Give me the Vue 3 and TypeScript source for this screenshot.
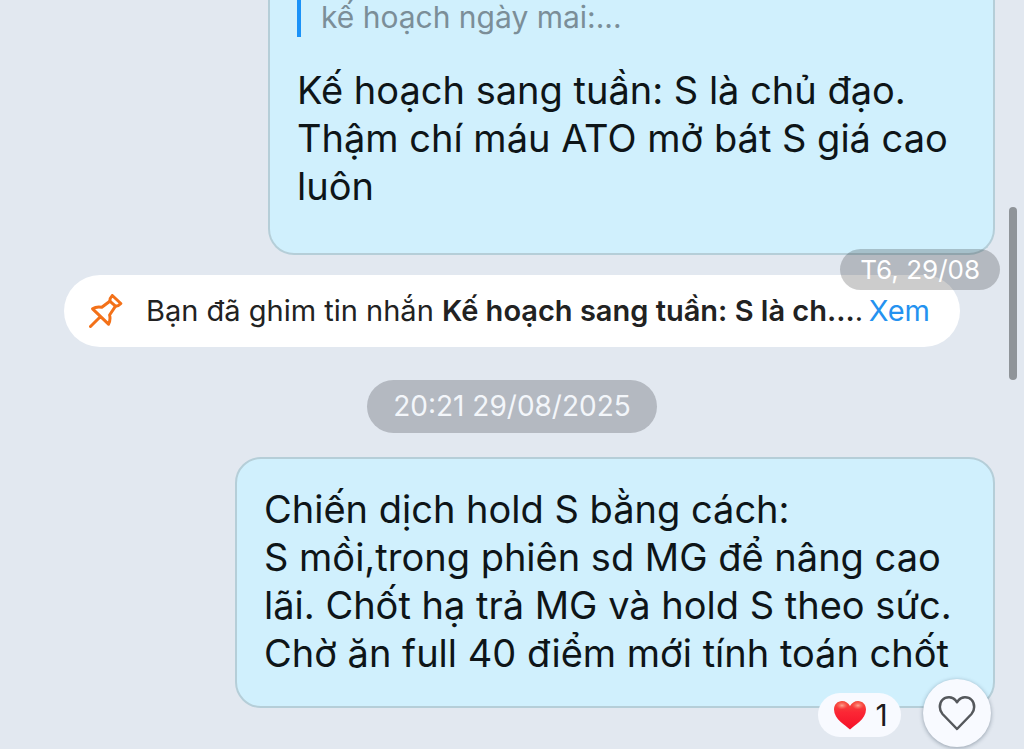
<script setup lang="ts">
import { ref } from 'vue'

interface Message {
  quote?: string
  lines: string[]
}

const earlier: Message = {
  quote: 'kế hoạch ngày mai:...',
  lines: ['Kế hoạch sang tuần: S là chủ đạo.', 'Thậm chí máu ATO mở bát S giá cao', 'luôn'],
}

const latest: Message = {
  lines: [
    'Chiến dịch hold S bằng cách:',
    'S mồi,trong phiên sd MG để nâng cao',
    'lãi. Chốt hạ trả MG và hold S theo sức.',
    'Chờ ăn full 40 điểm mới tính toán chốt',
  ],
}

const hearts = ref<number>(1)
</script>

<template>
  <main class="chat">
    <article class="bubble earlier">
      <blockquote class="quote">{{ earlier.quote }}</blockquote>
      <p class="text">{{ earlier.lines.join('\n') }}</p>
    </article>

    <section class="notice">
      <svg class="pin" viewBox="0 0 34 34" aria-hidden="true">
        <path d="M1.500 32.500L11.300 22.700M3.600 14.800Q7.500 12.200 12.800 13.300L20.800 7.200Q20.800 4 23.300 1.500L31.800 9.500Q29.500 12.200 26.500 12.200L20.600 21Q21.800 26 19.500 30.200Z" />
        <path d="M20.800 7.200L26.500 12.200" />
      </svg>
      <p class="notice-text">Bạn đã ghim tin nhắn <b>Kế hoạch sang tuần: S là ch...</b>.</p>
      <a class="view" href="#latest">Xem</a>
      <span class="day">T6, 29/08</span>
    </section>

    <time class="stamp" datetime="2025-08-29T20:21">20:21 29/08/2025</time>

    <article id="latest" class="bubble latest">
      <p class="text">{{ latest.lines.join('\n') }}</p>
      <div class="reactions">
        <button class="count" type="button" aria-label="Cảm xúc">
          <svg class="heart" viewBox="0 0 34 30" aria-hidden="true">
            <defs>
              <linearGradient id="heartFill" x1="0" y1="0" x2="0" y2="1">
                <stop offset="0" stop-color="#f4503f" />
                <stop offset="0.4" stop-color="#fb2735" />
                <stop offset="1" stop-color="#f51028" />
              </linearGradient>
              <radialGradient id="heartShine">
                <stop offset="0" stop-color="#ffc0a8" stop-opacity="0.8" />
                <stop offset="1" stop-color="#ff8070" stop-opacity="0" />
              </radialGradient>
            </defs>
            <path fill="url(#heartFill)" d="M17 29.500C13 25.500 1 19.500 1 9.500C1 4.500 4.500 1 9 1C12.500 1 15.500 3 17 6C18.500 3 21.500 1 25 1C29.500 1 33 4.500 33 9.500C33 19.500 21 25.500 17 29.500Z" />
            <ellipse cx="9" cy="5.500" rx="6" ry="4" fill="url(#heartShine)" />
            <ellipse cx="25" cy="5.500" rx="6" ry="4" fill="url(#heartShine)" />
          </svg>
          <span>{{ hearts }}</span>
        </button>
        <button class="like" type="button" aria-label="Thích" @click="hearts++">
          <svg class="outline" viewBox="0 0 38 36" aria-hidden="true">
            <path d="M19 34L4.500 19C1 15.200 1 8.500 4.300 5C8 1 14.500 1.300 17.500 5.200L19 7.200L20.500 5.200C23.500 1.300 30 1 33.700 5C37 8.500 37 15.200 33.500 19Z" />
          </svg>
        </button>
      </div>
    </article>

    <div class="scrollbar" aria-hidden="true"></div>
  </main>
</template>

<style>
body {
  margin: 0;
  background: #e2e8f0;
}
</style>

<style scoped>
.chat {
  position: relative;
  box-sizing: border-box;
  min-height: 100vh;
  display: flex;
  flex-direction: column;
  align-items: center;
  overflow: hidden;
  background: #e2e8f0;
  font-family: Inter, "Liberation Sans", sans-serif;
  color: #0e1518;
}

.bubble {
  position: relative;
  box-sizing: border-box;
  align-self: flex-end;
  margin-right: 29px;
  border: 2px solid #b5ced8;
  border-radius: 26px;
  background: #d0f0fd;
}

.earlier {
  width: 71%;
  padding: 0 26px 43px 27px;
  border-top: 0;
  border-top-left-radius: 0;
  border-top-right-radius: 0;
}

.latest {
  width: 760px;
  max-width: 90%;
  margin-top: 24px;
  padding: 26px 24px 29px 27px;
}

.quote {
  box-sizing: border-box;
  height: 37px;
  margin: 0 0 29px;
  padding-left: 20px;
  border-left: 4px solid #1a92f8;
  font-size: 30px;
  line-height: 34px;
  color: #7b8e98;
}

.text {
  margin: 0;
  font-size: 38px;
  line-height: 48px;
  white-space: pre;
}

.notice {
  position: relative;
  box-sizing: border-box;
  align-self: stretch;
  display: flex;
  align-items: center;
  height: 72px;
  margin: 20px 64px 0;
  padding: 0 30px 0 25px;
  border-radius: 36px;
  background: #fff;
  font-size: 29px;
  line-height: 36px;
  color: #222;
}

.pin {
  flex: none;
  width: 34px;
  height: 34px;
  margin-right: 23px;
  fill: none;
  stroke: #f37119;
  stroke-width: 3;
  stroke-linecap: round;
  stroke-linejoin: round;
}

.notice-text {
  flex: 1;
  margin: 0;
  white-space: nowrap;
}

.notice-text b {
  font-weight: 600;
}

.view {
  color: #2492f0;
  text-decoration: none;
}

.day {
  position: absolute;
  top: -26px;
  right: -40px;
  padding: 0 20px;
  border-radius: 21px;
  background: rgba(0, 0, 0, 0.2);
  font-size: 26px;
  line-height: 41px;
  color: #fff;
}

.stamp {
  margin-top: 33px;
  padding: 0 26px;
  border-radius: 27px;
  background: #b4b9c1;
  font-size: 28px;
  line-height: 53px;
  color: #f3f6fa;
}

.reactions {
  position: absolute;
  right: 2px;
  bottom: -41px;
  display: flex;
  align-items: center;
  gap: 22px;
}

button {
  display: flex;
  align-items: center;
  justify-content: center;
  padding: 0;
  border: 0;
  background: #f8faff;
  font: inherit;
  color: #1c1c1e;
}

.count {
  gap: 8px;
  width: 83px;
  height: 44px;
  margin-top: 4px;
  padding-left: 2px;
  border-radius: 22px;
  font-size: 30px;
}

.heart {
  width: 34px;
  height: 30px;
}

.like {
  width: 68px;
  height: 68px;
  border-radius: 50%;
  box-shadow: 0 1px 4px rgba(30, 50, 70, 0.4);
}

.outline {
  width: 38px;
  height: 36px;
  fill: none;
  stroke: #55585c;
  stroke-width: 2.500;
  stroke-linejoin: round;
}

.scrollbar {
  position: absolute;
  top: 207px;
  right: 7px;
  width: 8px;
  height: 173px;
  border-radius: 4px;
  background: #8f9499;
}
</style>
